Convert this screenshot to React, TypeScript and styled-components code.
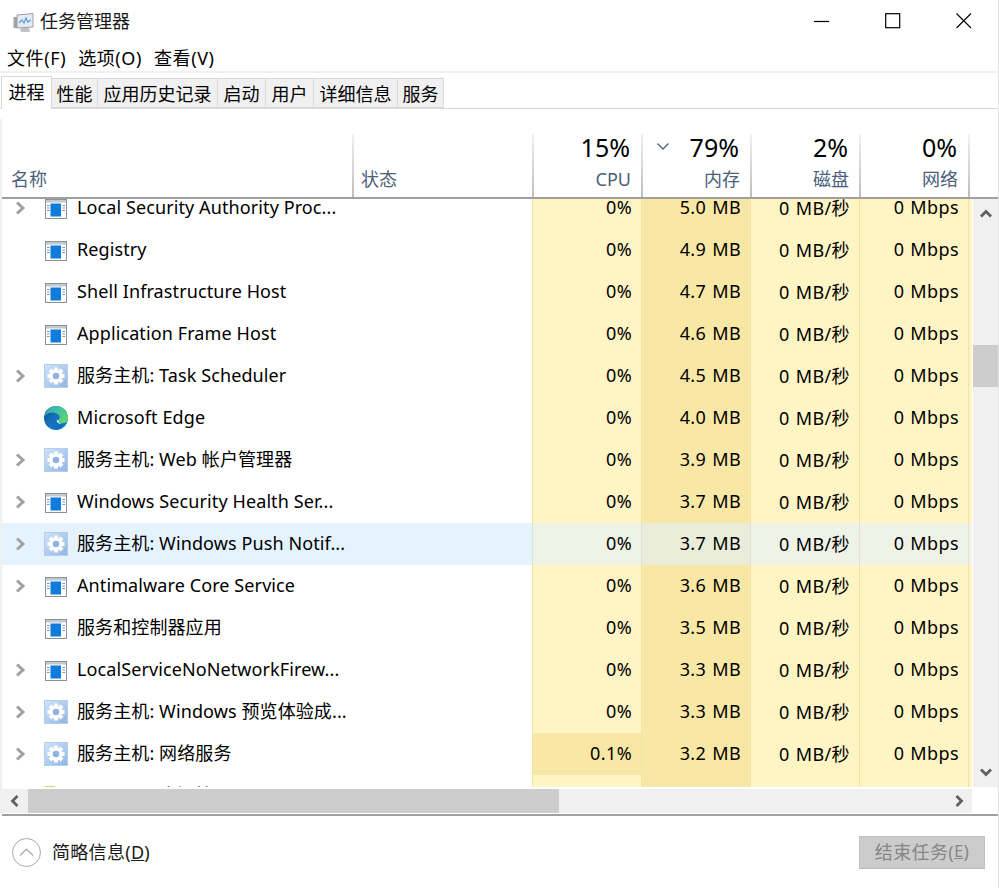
import React from "react";
import styled, { createGlobalStyle } from "styled-components";

const Global = createGlobalStyle`
  html, body { margin: 0; padding: 0; background: #fff; }
  body { font-family: "Noto Sans", "Noto Sans CJK SC", sans-serif; font-size: 18px; color: #000; }
  * { box-sizing: border-box; }
`;

const Window = styled.div`
  width: 999px; height: 888px; display: flex; flex-direction: column; overflow: hidden;
  border-right: 1px solid #e4e4e4; background: #fff;
`;
const TitleBar = styled.div`
  height: 44px; display: flex; align-items: center; padding-left: 13px;
`;
const TitleText = styled.span`
  margin-left: 6px; padding-bottom: 2px; font-size: 18px; line-height: 24px; color: #1a1a1a;
`;
const WindowButtons = styled.div`
  margin-left: auto; display: flex; margin-right: -1px; padding-bottom: 2px;
`;
const WindowButton = styled.div`
  width: 71px; height: 42px; display: flex; align-items: center; justify-content: center;
`;
const MenuBar = styled.div`
  height: 29px; display: flex; align-items: center; gap: 12px; padding-left: 7px;
  border-bottom: 2px solid #f0f0f0;
`;
const MenuItem = styled.span`
  font-size: 18px; line-height: 26px; letter-spacing: 0.6px;
`;
const TabStrip = styled.div`
  margin-top: 3px; height: 33px; display: flex; align-items: flex-end; padding-left: 1px;
  border-bottom: 1px solid #d9d9d9;
`;
const Tab = styled.div<{ $active?: boolean; $width: number }>`
  width: ${(p) => p.$width}px;
  height: ${(p) => (p.$active ? 33 : 30)}px;
  margin-bottom: ${(p) => (p.$active ? -1 : 0)}px;
  padding-bottom: ${(p) => (p.$active ? 4 : 0)}px;
  display: flex; align-items: center; justify-content: center;
  background: ${(p) => (p.$active ? "#fff" : "#f0f0f0")};
  border: 1px solid #d9d9d9;
  border-bottom: ${(p) => (p.$active ? "none" : "1px solid #d9d9d9")};
  border-left: ${(p) => (p.$active ? "1px solid #d9d9d9" : "none")};
  font-size: 18px;
`;
const Content = styled.div`
  margin-top: 10px; flex: 1; display: flex; flex-direction: column; min-height: 0;
  border-left: 2px solid #f0f0f0;
`;
const Header = styled.div`
  margin-top: 15px; height: 65px; display: grid;
  grid-template-columns: 352px 180px repeat(4, 109px) 1fr;
  border-bottom: 2px solid #a0a0a0;
`;
const HeaderCell = styled.div<{ $metric?: boolean; $last?: boolean; $inset?: number }>`
  position: relative; display: flex; flex-direction: column; justify-content: flex-end;
  align-items: ${(p) => (p.$metric ? "flex-end" : "flex-start")};
  padding: ${(p) => (p.$metric ? "0 10px 6px 0" : `0 0 6px ${p.$inset ?? 9}px`)};
  border-right: ${(p) => (p.$last ? "none" : "2px solid transparent")};
  border-image: ${(p) => (p.$last ? "none" : "linear-gradient(#f2f2f2, #bdbdbd) 1")};
`;
const Percent = styled.span`
  font-size: 25px; line-height: 26px; color: #000; margin: 0 1px 7px 0;
`;
const HeaderLabel = styled.span`
  font-size: 18px; line-height: 24px; color: #4c607a;
`;
const SortMark = styled.svg`
  position: absolute; left: 13px; top: 8px;
`;
const Middle = styled.div`
  flex: 1; min-height: 0; display: flex;
`;
const Viewport = styled.div`
  flex: 1; min-width: 0; overflow: hidden; height: 588px;
`;
const RowList = styled.div`
  margin-top: -12px;
`;
const RowGrid = styled.div`
  height: 42px; display: grid;
  grid-template-columns: 530px repeat(4, 109px) 1fr;
`;
const NameCell = styled.div<{ $selected?: boolean }>`
  display: flex; align-items: center; min-width: 0; white-space: nowrap;
  background: ${(p) => (p.$selected ? "#e5f3ff" : "#fff")};
`;
const Expander = styled.div`
  width: 42px; flex: none; padding-left: 12px; display: flex; align-items: center;
`;
const IconSlot = styled.div`
  width: 24px; height: 24px; flex: none; display: flex; align-items: center; justify-content: center;
`;
const NameText = styled.span`
  margin-left: 9px; padding-bottom: 2px; font-size: 18px; line-height: 24px; color: #000;
  letter-spacing: 0.1px;
`;
const bgFor = (tone: string, selected?: boolean) => {
  if (selected) return tone === "mid" ? "#e9edd9" : "#eff2e6";
  return tone === "mid" ? "#f9e8a5" : "#fff4c4";
};
const ValueCell = styled.div<{ $tone: string; $selected?: boolean }>`
  display: flex; align-items: center; justify-content: flex-end; padding: 0 9px 2px 0;
  font-size: 18px; white-space: nowrap; letter-spacing: 0.4px; word-spacing: 0.8px;
  background: ${(p) => bgFor(p.$tone, p.$selected)};
  border-left: 1px solid ${(p) => (p.$selected ? "#e2e2d2" : "#f1e2a6")};
`;
const EndCell = styled.div<{ $selected?: boolean }>`
  background: ${(p) => (p.$selected ? "#eff2e6" : "#fff4c4")};
  border-left: 1px solid ${(p) => (p.$selected ? "#e2e2d2" : "#f1e2a6")};
`;
const VScroll = styled.div`
  width: 25px; height: 588px; margin-left: 1px; background: #f0f0f0; flex: none;
  display: flex; flex-direction: column; align-items: center; justify-content: flex-start;
`;
const VArrow = styled.div<{ $bottom?: boolean }>`
  height: 30px; width: 100%; display: flex; align-items: center; justify-content: center;
  margin-top: ${(p) => (p.$bottom ? "auto" : "0")};
`;
const VThumb = styled.div`
  width: 100%; height: 42px; margin-top: 116px; background: #cdcdcd;
`;
const HScroll = styled.div`
  margin-top: 1px; width: 970px; height: 24px; background: #f0f0f0; display: flex; align-items: center; flex: none;
`;
const HArrow = styled.div<{ $end?: boolean }>`
  width: 26px; height: 24px; display: flex; align-items: center; justify-content: center;
  margin-left: ${(p) => (p.$end ? "auto" : "0")};
`;
const HThumb = styled.div`
  width: 531px; height: 24px; background: #cdcdcd;
`;
const Footer = styled.div`
  height: 74px; flex: none; display: flex; align-items: center; padding: 0 13px 0 10px;
  border-top: 2px solid #a0a0a0; margin-top: 1px; margin-left: 2px; margin-right: 0;
`;
const FooterLabel = styled.span`
  margin-left: 11px; padding-bottom: 3px; font-size: 18px; color: #1a1a1a; letter-spacing: 0.3px;
`;
const FooterKey = styled.span`
  font-size: 18px; text-decoration: underline;
`;
const EndButton = styled.div`
  margin-left: auto; width: 126px; height: 33px; padding-bottom: 3px;
  background: #cccccc; border: 1px solid #bfbfbf; letter-spacing: 0.4px;
  display: flex; align-items: center; justify-content: center; font-size: 18px; color: #868686;
`;
const ButtonKey = styled.span`
  font-size: 16px; text-decoration: underline;
`;

const Chevron = () => (
  <svg width="12" height="14" viewBox="0 0 12 14">
    <path d="M3 1.500 L9 7 L3 12.500" fill="none" stroke="#a0a0a0" strokeWidth="3" />
  </svg>
);
const ArrowIcon = ({ dir }: { dir: "up" | "down" | "left" | "right" }) => {
  const d = {
    up: "M2 9.500 L7 4.500 L12 9.500",
    down: "M2 4.500 L7 9.500 L12 4.500",
    left: "M9.500 2 L4.500 7 L9.500 12",
    right: "M4.500 2 L9.500 7 L4.500 12",
  }[dir];
  return (
    <svg width="14" height="14" viewBox="0 0 14 14">
      <path d={d} fill="none" stroke="#606060" strokeWidth="2.800" />
    </svg>
  );
};
const AppIcon = () => (
  <svg width="24" height="24" viewBox="0 0 24 24">
    <rect x="1.500" y="3.500" width="21" height="19" fill="#fff" stroke="#8d9299" />
    <rect x="2" y="4" width="20" height="2.500" fill="#c3c9d0" />
    <rect x="6.500" y="7.500" width="10.500" height="13" fill="#0f7bdc" />
    <path d="M3 9.500h2.500M3 12h2.500M3 14.500h2.500M18.500 9.500h2.500M18.500 12h2.500M18.500 14.500h2.500" stroke="#6f93b8" />
  </svg>
);
const GearIcon = () => {
  const teeth = [0, 45, 90, 135];
  return (
    <svg width="24" height="24" viewBox="0 0 24 24">
      <defs>
        <linearGradient id="gearbg" x1="0" y1="0" x2="1" y2="1">
          <stop offset="0" stopColor="#d2e4f8" />
          <stop offset="1" stopColor="#8fb6e6" />
        </linearGradient>
      </defs>
      <rect x="0.500" y="0.500" width="23" height="23" fill="url(#gearbg)" stroke="#b4cdea" />
      {teeth.map((a) => (
        <rect key={a} x="10" y="3.500" width="4" height="17" fill="#fff" transform={`rotate(${a} 12 12)`} />
      ))}
      <circle cx="12" cy="12" r="6.300" fill="#fff" />
      <circle cx="12" cy="12" r="3.300" fill="#8fb2e0" />
    </svg>
  );
};
const EdgeIcon = () => (
  <svg width="24" height="24" viewBox="0 0 24 24">
    <defs>
      <linearGradient id="edgeA" x1="0" y1="0" x2="1" y2="0.700">
        <stop offset="0" stopColor="#2aa9c9" />
        <stop offset="1" stopColor="#5ed66f" />
      </linearGradient>
      <linearGradient id="edgeB" x1="0" y1="0" x2="0.800" y2="1">
        <stop offset="0" stopColor="#0b4f94" />
        <stop offset="1" stopColor="#1a8fdc" />
      </linearGradient>
    </defs>
    <circle cx="12" cy="12" r="12" fill="url(#edgeB)" />
    <path d="M0.700 10 C2.500 3.500 7.500 0 12 0 C19 0 24 5 24 12.500 C24 15.500 21 17.500 17.500 17.500 C14.500 17.500 13 16 14 14.500 C15.500 13 16 11 14.500 9 C12 5.500 4 5.500 0.700 10Z" fill="url(#edgeA)" />
    <path d="M8.500 13 C8.500 10.500 10.500 8.500 13 8.500 C15.500 8.500 16.500 11.500 14.500 14 C13.500 15.500 14.500 17.500 17.500 17.500 C19.500 17.500 21 17 22.500 16 C20 21 15.500 24 11.500 23.800 C6.500 23 5.500 16.500 8.500 13Z" fill="#1370c0" />
    <path d="M14.800 13.800 C13.600 15.500 14.600 17.500 17.500 17.500 C15.500 18 13 17 12.800 15.200 C13 14 14 13.500 14.800 13.800Z" fill="#e8f6ff" />
  </svg>
);
const FolderIcon = () => (
  <svg width="24" height="24" viewBox="0 0 24 24">
    <path d="M1 2.500h10l2 3h10v16H1z" fill="#f6d365" stroke="#e4cd6a" />
  </svg>
);
const MonitorIcon = () => (
  <svg width="21" height="21" viewBox="0 0 21 21">
    <rect x="0.500" y="5" width="4" height="11" fill="#a3a3a3" />
    <path d="M4 3 L20 1.500 V15 L4 16Z" fill="#e4ebf3" stroke="#9a9ea3" />
    <path d="M6 11 L9 8 L11 11 L13 6 L15 10 L18 8" fill="none" stroke="#5f9fd8" strokeWidth="1.200" />
    <path d="M7 16 H16 L17 20 H8Z" fill="#bfc2c5" />
  </svg>
);

type IconKind = "app" | "gear" | "edge" | "folder";
type RowData = {
  name: string; icon: IconKind; mem: string; exp?: boolean; cpu?: string; selected?: boolean; hot?: boolean;
};
const rows: RowData[] = [
  { name: "Local Security Authority Proc...", icon: "app", mem: "5.0 MB", exp: true },
  { name: "Registry", icon: "app", mem: "4.9 MB" },
  { name: "Shell Infrastructure Host", icon: "app", mem: "4.7 MB" },
  { name: "Application Frame Host", icon: "app", mem: "4.6 MB" },
  { name: "服务主机: Task Scheduler", icon: "gear", mem: "4.5 MB", exp: true },
  { name: "Microsoft Edge", icon: "edge", mem: "4.0 MB" },
  { name: "服务主机: Web 帐户管理器", icon: "gear", mem: "3.9 MB", exp: true },
  { name: "Windows Security Health Ser...", icon: "app", mem: "3.7 MB", exp: true },
  { name: "服务主机: Windows Push Notif...", icon: "gear", mem: "3.7 MB", exp: true, selected: true },
  { name: "Antimalware Core Service", icon: "app", mem: "3.6 MB", exp: true },
  { name: "服务和控制器应用", icon: "app", mem: "3.5 MB" },
  { name: "LocalServiceNoNetworkFirew...", icon: "app", mem: "3.3 MB", exp: true },
  { name: "服务主机: Windows 预览体验成...", icon: "gear", mem: "3.3 MB", exp: true },
  { name: "服务主机: 网络服务", icon: "gear", mem: "3.2 MB", exp: true, cpu: "0.1%", hot: true },
  { name: "Windows 资源管理器", icon: "folder", mem: "3.1 MB" },
];
const iconMap = { app: AppIcon, gear: GearIcon, edge: EdgeIcon, folder: FolderIcon };
const tabs: [string, number][] = [
  ["性能", 46], ["应用历史记录", 120], ["启动", 48], ["用户", 48], ["详细信息", 84], ["服务", 46],
];

export default function App() {
  return (
    <Window>
      <Global />
      <TitleBar>
        <MonitorIcon />
        <TitleText>任务管理器</TitleText>
        <WindowButtons>
          <WindowButton>
            <svg width="16" height="16" viewBox="0 0 16 16"><path d="M0 8.500H15" stroke="#000" strokeWidth="1.200" /></svg>
          </WindowButton>
          <WindowButton>
            <svg width="16" height="16" viewBox="0 0 16 16"><rect x="0.700" y="0.700" width="14" height="14" fill="none" stroke="#000" strokeWidth="1.200" /></svg>
          </WindowButton>
          <WindowButton>
            <svg width="16" height="16" viewBox="0 0 16 16"><path d="M0.500 0.500L15 15M15 0.500L0.500 15" stroke="#000" strokeWidth="1.100" /></svg>
          </WindowButton>
        </WindowButtons>
      </TitleBar>
      <MenuBar>
        <MenuItem>文件(F)</MenuItem>
        <MenuItem>选项(O)</MenuItem>
        <MenuItem>查看(V)</MenuItem>
      </MenuBar>
      <TabStrip>
        <Tab $active $width={51}>进程</Tab>
        {tabs.map(([t, w]) => <Tab key={t} $width={w}>{t}</Tab>)}
      </TabStrip>
      <Content>
        <Header>
          <HeaderCell><HeaderLabel>名称</HeaderLabel></HeaderCell>
          <HeaderCell $inset={7}><HeaderLabel>状态</HeaderLabel></HeaderCell>
          <HeaderCell $metric><Percent>15%</Percent><HeaderLabel>CPU</HeaderLabel></HeaderCell>
          <HeaderCell $metric>
            <SortMark width="14" height="9" viewBox="0 0 14 9"><path d="M1.500 1.500L7 7L12.500 1.500" fill="none" stroke="#4c607a" strokeWidth="1.300" /></SortMark>
            <Percent>79%</Percent><HeaderLabel>内存</HeaderLabel>
          </HeaderCell>
          <HeaderCell $metric><Percent>2%</Percent><HeaderLabel>磁盘</HeaderLabel></HeaderCell>
          <HeaderCell $metric><Percent>0%</Percent><HeaderLabel>网络</HeaderLabel></HeaderCell>
          <HeaderCell $last />
        </Header>
        <Middle>
          <Viewport>
            <RowList>
              {rows.map((r) => {
                const Icon = iconMap[r.icon];
                return (
                  <RowGrid key={r.name}>
                    <NameCell $selected={r.selected}>
                      <Expander>{r.exp && <Chevron />}</Expander>
                      <IconSlot><Icon /></IconSlot>
                      <NameText>{r.name}</NameText>
                    </NameCell>
                    <ValueCell $tone={r.hot ? "mid" : "low"} $selected={r.selected}>{r.cpu ?? "0%"}</ValueCell>
                    <ValueCell $tone="mid" $selected={r.selected}>{r.mem}</ValueCell>
                    <ValueCell $tone="low" $selected={r.selected}>0 MB/秒</ValueCell>
                    <ValueCell $tone="low" $selected={r.selected}>0 Mbps</ValueCell>
                    <EndCell $selected={r.selected} />
                  </RowGrid>
                );
              })}
            </RowList>
          </Viewport>
          <VScroll>
            <VArrow><ArrowIcon dir="up" /></VArrow>
            <VThumb />
            <VArrow $bottom><ArrowIcon dir="down" /></VArrow>
          </VScroll>
        </Middle>
        <HScroll>
          <HArrow><ArrowIcon dir="left" /></HArrow>
          <HThumb />
          <HArrow $end><ArrowIcon dir="right" /></HArrow>
        </HScroll>
      </Content>
      <Footer>
        <svg width="29" height="29" viewBox="0 0 29 29">
          <circle cx="14.500" cy="14.500" r="14" fill="none" stroke="#a8a8a8" />
          <path d="M8 17.500L14.500 11L21 17.500" fill="none" stroke="#a8a8a8" strokeWidth="1.200" />
        </svg>
        <FooterLabel>简略信息(<FooterKey>D</FooterKey>)</FooterLabel>
        <EndButton>结束任务(<ButtonKey>E</ButtonKey>)</EndButton>
      </Footer>
    </Window>
  );
}
